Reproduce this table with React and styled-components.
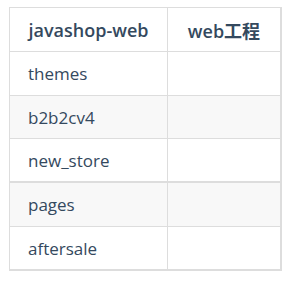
import styled, { createGlobalStyle } from 'styled-components';

const GlobalStyle = createGlobalStyle`
  body {
    margin: 0;
    padding: 7px 0 0 9px;
    background: #ffffff;
    font-family: "Source Sans Pro", "Open Sans", "Noto Sans", "Noto Sans CJK SC", sans-serif;
    color: #34495e;
  }
`;

const Table = styled.table`
  border-collapse: separate;
  border-spacing: 0;
  border-top: 1px solid #dddddd;
  border-left: 1px solid #dddddd;
  font-size: 17px;
`;

const Row = styled.tr`
  background: ${(p) => (p.$striped ? '#f8f8f8' : '#ffffff')};
`;

const HeadCell = styled.th`
  height: 44px;
  padding: 0;
  font-size: 18px;
  font-weight: 600;
  text-align: center;
  border-right: ${(p) => (p.$last ? '2px' : '1px')} solid #dddddd;
  border-bottom: 1px solid #dddddd;
  box-sizing: border-box;
  width: ${(p) => (p.$last ? '114px' : '158px')};
`;

const Cell = styled.td`
  height: ${(p) => p.$h}px;
  padding: 0 0 0 18px;
  text-align: left;
  border-right: ${(p) => (p.$last ? '2px' : '1px')} solid #dddddd;
  border-bottom: ${(p) => p.$bottom}px solid #dddddd;
  box-sizing: border-box;
`;

const rows = [
  { name: 'themes', h: 44, bottom: 1 },
  { name: 'b2b2cv4', h: 43, bottom: 1 },
  { name: 'new_store', h: 44, bottom: 2 },
  { name: 'pages', h: 44, bottom: 1 },
  { name: 'aftersale', h: 44, bottom: 2 },
];

export default function App() {
  return (
    <>
      <GlobalStyle />
      <Table>
        <thead>
          <tr>
            <HeadCell>javashop-web</HeadCell>
            <HeadCell $last>web工程</HeadCell>
          </tr>
        </thead>
        <tbody>
          {rows.map((r, i) => (
            <Row key={r.name} $striped={i % 2 === 1}>
              <Cell $h={r.h} $bottom={r.bottom}>{r.name}</Cell>
              <Cell $h={r.h} $bottom={r.bottom} $last />
            </Row>
          ))}
        </tbody>
      </Table>
    </>
  );
}
